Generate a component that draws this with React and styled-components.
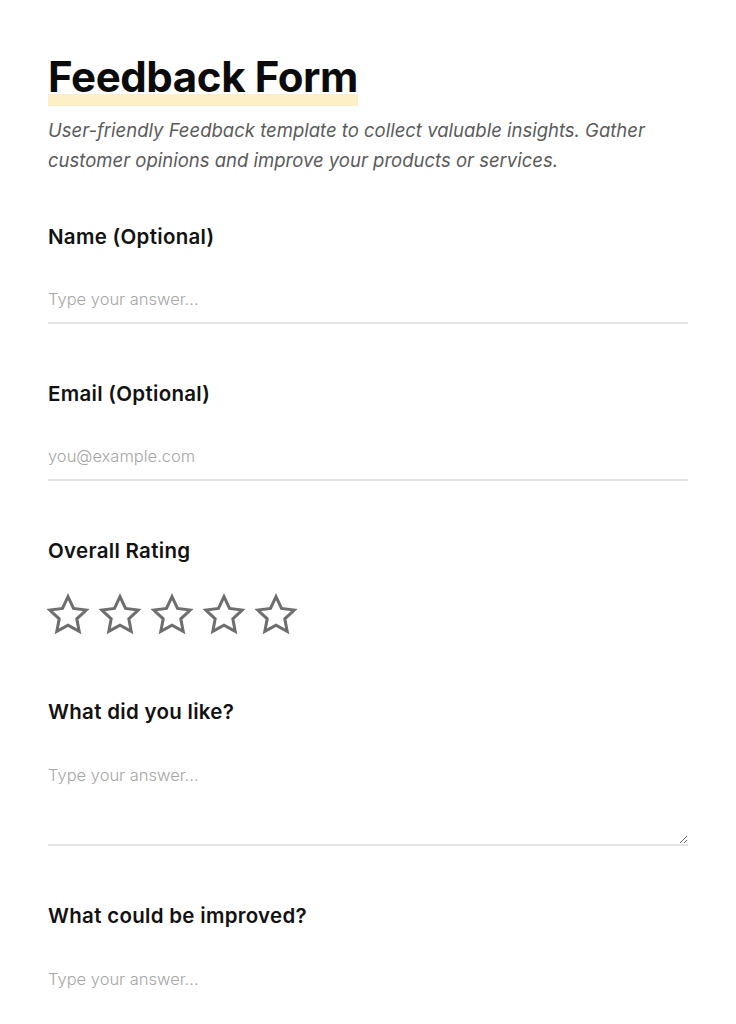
import React from 'react'
import styled, { createGlobalStyle } from 'styled-components'

const GlobalStyle = createGlobalStyle`
  html, body {
    margin: 0;
    padding: 0;
    background: #ffffff;
  }
  body {
    font-family: Inter, "Noto Sans", sans-serif;
    color: #111111;
  }
  * {
    box-sizing: border-box;
  }
`

const Star = () =>
  <svg width="48" height="48" viewBox="0 0 24 24" fill="none">
    <polygon
      points="12,2.8 14.75,8.7 21.1,9.5 16.4,13.9 17.6,20.2 12,17.1 6.4,20.2 7.6,13.9 2.9,9.5 9.25,8.7"
      stroke="#6e6e6e"
      strokeWidth="1.5"
      strokeLinejoin="miter"
    />
  </svg>

const App = () =>
  <Page>
    <GlobalStyle />
    <Header>
      <Title>Feedback Form</Title>
      <Subtitle>
        User-friendly Feedback template to collect valuable insights. Gather
        customer opinions and improve your products or services.
      </Subtitle>
    </Header>

    <Field>
      <Label>Name (Optional)</Label>
      <TextInput type="text" placeholder="Type your answer..." />
    </Field>

    <Field>
      <Label>Email (Optional)</Label>
      <TextInput type="email" placeholder="you@example.com" />
    </Field>

    <Field>
      <Label>Overall Rating</Label>
      <Stars>
        {[1, 2, 3, 4, 5].map(n =>
          <StarButton key={n} type="button" aria-label={`${n} star`}>
            <Star />
          </StarButton>
        )}
      </Stars>
    </Field>

    <Field>
      <Label>What did you like?</Label>
      <TextArea placeholder="Type your answer..." />
    </Field>

    <Field>
      <Label>What could be improved?</Label>
      <TextArea placeholder="Type your answer..." />
    </Field>
  </Page>

export default App

const Page = styled.div`
  padding: 52px 48px 48px;
  display: flex;
  flex-direction: column;
  gap: 56px;
`

const Header = styled.div`
  display: flex;
  flex-direction: column;
  align-items: flex-start;
  gap: 9px;
  margin-bottom: -8px;
`

const Title = styled.h1`
  margin: 0;
  font-size: 42px;
  line-height: 50px;
  padding-bottom: 4px;
  font-weight: 700;
  letter-spacing: -0.4px;
  color: #0b0b0b;
  background: linear-gradient(to bottom, transparent 77%, #fdf0c6 77%);
`

const Subtitle = styled.p`
  margin: 0;
  font-size: 18.5px;
  line-height: 30px;
  font-style: italic;
  font-weight: 400;
  color: #5b5b5b;
  max-width: 640px;
`

const Field = styled.div`
  display: flex;
  flex-direction: column;
  gap: 24px;
`

const Label = styled.label`
  font-size: 20.5px;
  line-height: 28px;
  font-weight: 600;
  letter-spacing: 0.3px;
  color: #121212;
`

const fieldText = `
  width: 100%;
  border: none;
  border-bottom: 2px solid #e4e4e4;
  outline: none;
  background: transparent;
  font-family: Inter, "Noto Sans", sans-serif;
  font-size: 16.5px;
  font-weight: 300;
  color: #222222;
  padding: 0;
  &::placeholder {
    color: #a6a6a6;
  }
`

const TextInput = styled.input`
  ${fieldText}
  height: 49px;
`

const TextArea = styled.textarea`
  ${fieldText}
  height: 96px;
  padding-top: 12px;
  line-height: 26px;
  resize: vertical;
`

const Stars = styled.div`
  display: flex;
  gap: 4px;
  height: 51px;
  margin-top: 2px;
  margin-left: -4px;
`

const StarButton = styled.button`
  border: none;
  background: none;
  padding: 0;
  width: 48px;
  height: 48px;
  cursor: pointer;
  display: flex;
`
